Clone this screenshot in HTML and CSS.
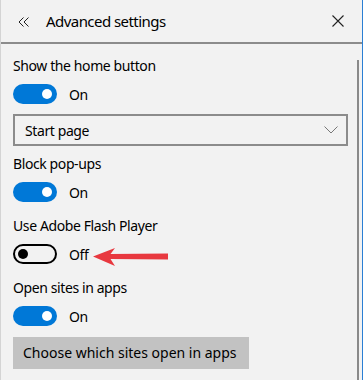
FILE: index.html
```html
<!DOCTYPE html>
<html lang="en">
<head>
    <meta charset="UTF-8">
    <title>Advanced settings</title>
    <link rel="stylesheet" href="styles.css">
</head>
<body>
    <div class="window">
        <div class="header">
            <svg class="icon back" width="12" height="10" viewBox="0 0 12 10">
                <path d="M5.5 0.5 L1 5 L5.5 9.5 M10.5 0.5 L6 5 L10.5 9.5" fill="none" stroke="#222" stroke-width="1"/>
            </svg>
            <span class="title">Advanced settings</span>
            <svg class="icon close" width="12" height="12" viewBox="0 0 12 12">
                <path d="M0.5 0.5 L11.5 11.5 M11.5 0.5 L0.5 11.5" fill="none" stroke="#222" stroke-width="1.1"/>
            </svg>
        </div>
        <div class="body">
            <div class="content">
                <div class="setting with-select">
                    <div class="label">Show the home button</div>
                    <div class="toggle-row">
                        <span class="toggle on"><span class="knob"></span></span>
                        <span class="state">On</span>
                    </div>
                    <div class="select">
                        <span>Start page</span>
                        <svg width="14" height="8" viewBox="0 0 14 8">
                            <path d="M0.5 0.5 L7 7 L13.5 0.5" fill="none" stroke="#777" stroke-width="1"/>
                        </svg>
                    </div>
                </div>
                <div class="setting">
                    <div class="label">Block pop-ups</div>
                    <div class="toggle-row">
                        <span class="toggle on"><span class="knob"></span></span>
                        <span class="state">On</span>
                    </div>
                </div>
                <div class="setting">
                    <div class="label">Use Adobe Flash Player</div>
                    <div class="toggle-row">
                        <span class="toggle off"><span class="knob"></span></span>
                        <span class="state">Off</span>
                    </div>
                </div>
                <div class="setting">
                    <div class="label">Open sites in apps</div>
                    <div class="toggle-row">
                        <span class="toggle on"><span class="knob"></span></span>
                        <span class="state">On</span>
                    </div>
                    <div class="button">Choose which sites open in apps</div>
                </div>
            </div>
            <div class="scrollbar"><div class="thumb"></div></div>
        </div>
        <!-- annotation arrow pointing at the Flash toggle -->
        <svg class="arrow" width="76" height="20" viewBox="0 0 76 20">
            <path d="M0 9.5 L22 1 L17.5 7 L75 6.5 L75 12.5 L17.5 12 L22 19 Z" fill="#e8383f"/>
        </svg>
    </div>
</body>
</html>
```

FILE: styles.css
```css
body {
    margin: 0;
    background-color: #f2f2f2;
    font-family: 'Noto Sans', 'Open Sans', sans-serif;
    color: #000;
}

.window {
    position: relative;
    height: 380px;
    border-left: 1px solid #d4d4d4;
    border-right: 1px solid #2a7fd4;
    box-sizing: border-box;
    display: flex;
    flex-direction: column;
    overflow: hidden;
}

.header {
    height: 42px;
    border-bottom: 2px solid #8c8c8c;
    display: flex;
    align-items: center;
    flex-shrink: 0;
}

.back {
    margin-left: 17px;
    margin-top: 1px;
}

.title {
    margin-left: 16px;
    font-size: 15px;
    letter-spacing: -0.55px;
    flex: 1;
}

.close {
    margin-right: 18px;
}

.body {
    display: flex;
    flex: 1;
}

.content {
    flex: 1;
    padding: 12px 0 0 12px;
}

.scrollbar {
    width: 5px;
    padding-top: 16px;
}

.thumb {
    width: 2px;
    height: 100%;
    background-color: #8a8a8a;
}

.setting {
    margin-bottom: 14px;
}

.setting.with-select {
    margin-bottom: 8px;
}

.label {
    font-size: 14px;
    line-height: 20px;
    letter-spacing: -0.4px;
}

.toggle-row {
    display: flex;
    align-items: center;
    margin-top: 8px;
}

.toggle {
    width: 44px;
    height: 20px;
    border-radius: 10px;
    box-sizing: border-box;
    display: flex;
    align-items: center;
    padding: 0 5px;
}

.toggle .knob {
    width: 10px;
    height: 10px;
    border-radius: 50%;
}

.toggle.on {
    background-color: #0078d7;
    justify-content: flex-end;
}

.toggle.on .knob {
    background-color: #fff;
}

.toggle.off {
    border: 2px solid #000;
    padding: 0 3px;
}

.toggle.off .knob {
    background-color: #000;
}

.state {
    margin-left: 12px;
    font-size: 14px;
    letter-spacing: -0.4px;
}

.select {
    margin-top: 10px;
    width: 335px;
    height: 32px;
    border: 2px solid #8c8c8c;
    box-sizing: border-box;
    display: flex;
    align-items: center;
    justify-content: space-between;
    padding: 0 8px 0 10px;
    font-size: 14px;
    letter-spacing: -0.4px;
}

.button {
    margin-top: 11px;
    width: 236px;
    height: 32px;
    line-height: 32px;
    box-sizing: border-box;
    padding-left: 10px;
    background-color: #c2c2c2;
    font-size: 14px;
}

.arrow {
    position: absolute;
    left: 92px;
    top: 247px;
}
```
